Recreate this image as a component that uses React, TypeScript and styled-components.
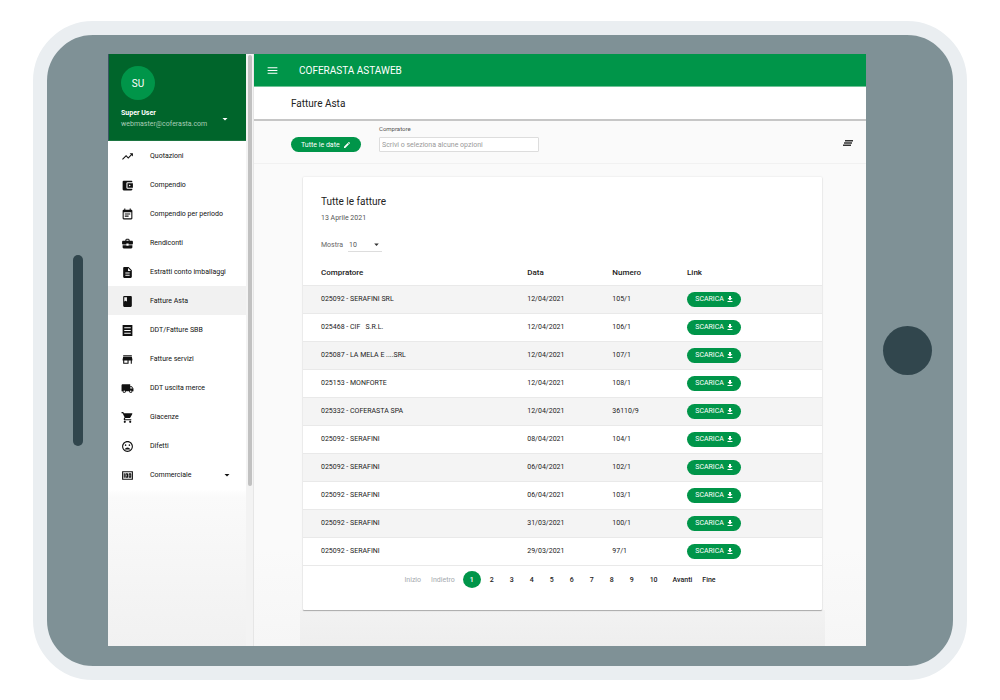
import React from "react";
import styled, { createGlobalStyle } from "styled-components";
import {
  MdTrendingUp,
  MdAccountBalanceWallet,
  MdEventNote,
  MdBusinessCenter,
  MdDescription,
  MdBook,
  MdStore,
  MdLocalShipping,
  MdShoppingCart,
  MdMoodBad,
  MdMoney,
  MdMenu,
  MdEdit,
  MdArrowDropDown,
} from "react-icons/md";

const GlobalStyle = createGlobalStyle`
  * { box-sizing: border-box; }
  body {
    margin: 0;
    background: #fff;
    font-family: Roboto, "Liberation Sans", sans-serif;
    font-size: 7px;
    color: #222;
  }
  button, input, select { font-family: inherit; margin: 0; }
  svg { display: block; flex: none; }
`;

const green = "#009549";

const Page = styled.div`
  display: flex;
  min-height: 100vh;
  padding: 21px 33px 20px;
`;

const Tablet = styled.div`
  flex: 1;
  min-width: 0;
  display: flex;
  align-items: stretch;
  border: 14px solid #eaeef1;
  border-radius: 60px;
  background: #7f9196;
  padding: 19px 0 20px;
`;

const Bezel = styled.div<{ $width: number }>`
  flex: none;
  width: ${(p) => p.$width}px;
  display: flex;
  align-items: center;
  justify-content: center;
`;

const HomeBezel = styled(Bezel)`
  padding-right: 4px;
`;

const Speaker = styled.div`
  width: 10px;
  height: 191px;
  border-radius: 5px;
  background: #31464d;
`;

const HomeButton = styled.div`
  width: 49px;
  height: 49px;
  border-radius: 50%;
  background: #31464d;
`;

const Screen = styled.div`
  flex: 1;
  min-width: 0;
  display: flex;
  background: #fafafa;
`;

const Sidebar = styled.aside`
  flex: none;
  width: 138px;
  display: flex;
  flex-direction: column;
  background: #fff;
`;

const Profile = styled.header`
  height: 87px;
  padding: 12px 12px 0;
  background: #00652b;
  border-left: 1px solid #3b5563;
  border-bottom: 1px solid #1c7541;
  color: #fff;
`;

const Avatar = styled.div`
  width: 34px;
  height: 34px;
  border-radius: 50%;
  background: ${green};
  display: flex;
  align-items: center;
  justify-content: center;
  font-size: 10px;
`;

const Account = styled.button`
  width: 100%;
  border: 0;
  padding: 0 3px 0 0;
  margin-top: 8px;
  background: none;
  color: inherit;
  display: flex;
  align-items: center;
  justify-content: space-between;
  text-align: left;
  font-size: 7px;
  line-height: 11px;
`;

const Email = styled.span`
  display: block;
  color: #a9cdb7;
`;

const UserName = styled.strong`
  display: block;
`;

const Nav = styled.nav`
  display: flex;
  flex-direction: column;
`;

const NavItem = styled.a<{ $active?: boolean }>`
  height: 29px;
  padding: 1px 13px 0;
  display: flex;
  align-items: center;
  gap: 16px;
  color: #111;
  font-size: 7px;
  text-decoration: none;
  white-space: nowrap;
  background: ${(p) => (p.$active ? "#f1f1f1" : "transparent")};
`;

const NavLabel = styled.span`
  flex: 1;
`;

const SidebarFill = styled.div`
  flex: 1;
  background: linear-gradient(#fff, #fafafa 8px, #f1f1f1);
`;

const ScrollTrack = styled.div`
  flex: none;
  width: 8px;
  padding: 1px 2px;
  background: #f3f3f3;
  border-right: 1px solid #e6e6e6;
`;

const ScrollThumb = styled.div`
  width: 4px;
  height: 73%;
  border-radius: 2px;
  background: #c1c1c1;
`;

const Main = styled.main`
  flex: 1;
  min-width: 0;
  display: flex;
  flex-direction: column;
`;

const AppBar = styled.header`
  height: 33px;
  padding: 0 12px;
  display: flex;
  align-items: center;
  gap: 20px;
  background: ${green};
  border-bottom: 1px solid #6fc397;
  color: #fff;
  font-size: 10px;
`;

const IconButton = styled.button`
  border: 0;
  padding: 0;
  background: none;
  color: inherit;
  display: flex;
`;

const TitleBar = styled.div`
  height: 34px;
  padding: 0 37px;
  display: flex;
  align-items: center;
  background: #fff;
  border-bottom: 2px solid #c6c6c6;
`;

const PageTitle = styled.h1`
  margin: 0;
  font-size: 10px;
  font-weight: 400;
`;

const Filters = styled.div`
  height: 43px;
  padding: 3px 13px 0 37px;
  display: flex;
  align-items: flex-start;
  gap: 18px;
  border-bottom: 1px solid #f1f1f1;
`;

const DateButton = styled.button`
  margin-top: 13px;
  width: 70px;
  height: 15px;
  padding: 0 10px;
  border: 0;
  border-radius: 8px;
  background: ${green};
  color: #fff;
  font-size: 7px;
  display: flex;
  align-items: center;
  justify-content: space-between;
  white-space: nowrap;
`;

const Field = styled.label`
  display: flex;
  flex-direction: column;
  gap: 4px;
  font-size: 6px;
  line-height: 9px;
  color: #555;
`;

const TextBox = styled.input`
  width: 160px;
  height: 15px;
  padding: 0 2px;
  border: 1px solid #ddd;
  border-radius: 1px;
  background: #fff;
  font-size: 7px;
  &::placeholder { color: #999; opacity: 1; }
`;

const ClearFilters = styled(IconButton)`
  margin: 16px 0 0 auto;
  color: #333;
`;

const Content = styled.div`
  flex: 1;
  display: flex;
  flex-direction: column;
  padding-top: 13px;
  background: linear-gradient(#fafafa 80%, #f6f6f6);
`;

const Card = styled.section`
  position: relative;
  margin: 0 44px 0 49px;
  padding: 18px 0 16px;
  background: #fff;
  border-radius: 1px;
  box-shadow: 0 1px 1px #aaa, 0 0 2px #ddd;
`;

const ContentFill = styled.div`
  flex: 1;
  margin: 0 41px 0 46px;
  background: linear-gradient(#f2f2f2, #eee);
`;

const CardHead = styled.div`
  padding: 0 18px;
`;

const CardTitle = styled.h2`
  margin: 0;
  font-size: 10px;
  line-height: 13px;
  font-weight: 400;
`;

const CardDate = styled.p`
  margin: 5px 0 0;
  line-height: 11px;
  color: #555;
`;

const PageSize = styled.label`
  margin-top: 14px;
  display: flex;
  align-items: center;
  gap: 5px;
  color: #666;
`;

const SelectWrap = styled.span`
  display: grid;
  align-items: center;
  justify-items: end;
  width: 34px;
  height: 14px;
  border-bottom: 1px solid #ddd;
  color: #333;
  & > * { grid-area: 1 / 1; }
`;

const Select = styled.select`
  appearance: none;
  width: 100%;
  border: 0;
  padding: 0 1px;
  background: none;
  color: #555;
  font-size: 7px;
`;

const Table = styled.table`
  width: 100%;
  table-layout: fixed;
  border-collapse: collapse;
  text-align: left;
`;

const Th = styled.th<{ $width?: string }>`
  width: ${(p) => p.$width ?? "auto"};
  height: 33px;
  padding: 8px 0 0;
  font-size: 8px;
  font-weight: 500;
  &:first-child { padding-left: 18px; }
`;

const Tr = styled.tr`
  border-top: 1px solid #e9e9e9;
  &:nth-child(odd) { background: #f4f4f4; }
  &:last-child { border-bottom: 1px solid #e9e9e9; }
`;

const Td = styled.td`
  height: 28px;
  padding: 0;
  font-size: 7px;
  white-space: pre;
  &:first-child { padding-left: 18px; }
`;

const Download = styled.a`
  width: 54px;
  height: 15px;
  border-radius: 8px;
  background: ${green};
  color: #fff;
  font-size: 7px;
  text-decoration: none;
  display: flex;
  align-items: center;
  justify-content: center;
  gap: 3px;
`;

const Pager = styled.nav`
  height: 28px;
  padding-right: 5px;
  display: flex;
  align-items: center;
  justify-content: center;
`;

const PageLink = styled.button`
  border: 0;
  padding: 0 8px;
  background: none;
  color: #222;
  font-size: 7px;
  font-weight: 500;
`;

const CurrentPage = styled(PageLink)`
  width: 18px;
  height: 17px;
  margin: 0 1px 0 3px;
  padding: 0;
  border-radius: 50%;
  background: ${green};
  color: #fff;
`;

const PagerWord = styled(PageLink)`
  padding: 0 5px;
  &:disabled { color: #a5a9ae; font-weight: 400; }
`;

const PagerNext = styled(PagerWord)`
  margin-left: 2px;
`;

const ReceiptIcon = ({ size }: { size: number }) => (
  <svg width={size} height={size} viewBox="0 0 24 24" fill="currentColor" aria-hidden="true">
    <path
      fillRule="evenodd"
      d="M3 2h18v20H3zM6 6v2h12V6zM6 11v2h12v-2zM6 16v2h12v-2z"
    />
  </svg>
);

const ClearIcon = () => (
  <svg width="10" height="6" viewBox="0 0 10 6" fill="currentColor" aria-hidden="true">
    <path d="M2 0h8v1.400H2zM1 2.300h8v1.400H1zM0 4.600h8V6H0z" />
  </svg>
);

const DownloadIcon = () => (
  <svg width="6" height="6" viewBox="0 0 12 12" fill="currentColor" aria-hidden="true">
    <path d="M4 0h4v4h3L6 9 1 4h3zM1 10h10v2H1z" />
  </svg>
);

const menu = [
  { label: "Quotazioni", Icon: MdTrendingUp },
  { label: "Compendio", Icon: MdAccountBalanceWallet },
  { label: "Compendio per periodo", Icon: MdEventNote },
  { label: "Rendiconti", Icon: MdBusinessCenter },
  { label: "Estratti conto imballaggi", Icon: MdDescription },
  { label: "Fatture Asta", Icon: MdBook, active: true },
  { label: "DDT/Fatture SBB", Icon: ReceiptIcon },
  { label: "Fatture servizi", Icon: MdStore },
  { label: "DDT uscita merce", Icon: MdLocalShipping },
  { label: "Giacenze", Icon: MdShoppingCart },
  { label: "Difetti", Icon: MdMoodBad },
  { label: "Commerciale", Icon: MdMoney, expandable: true },
];

const invoices = [
  ["025092 - SERAFINI SRL", "12/04/2021", "105/1"],
  ["025468 - CIF   S.R.L.", "12/04/2021", "106/1"],
  ["025087 - LA MELA E ....SRL", "12/04/2021", "107/1"],
  ["025153 - MONFORTE", "12/04/2021", "108/1"],
  ["025332 - COFERASTA SPA", "12/04/2021", "36110/9"],
  ["025092 - SERAFINI", "08/04/2021", "104/1"],
  ["025092 - SERAFINI", "06/04/2021", "102/1"],
  ["025092 - SERAFINI", "06/04/2021", "103/1"],
  ["025092 - SERAFINI", "31/03/2021", "100/1"],
  ["025092 - SERAFINI", "29/03/2021", "97/1"],
];

export default function App() {
  return (
    <Page>
      <GlobalStyle />
      <Tablet>
        <Bezel $width={61}>
          <Speaker />
        </Bezel>
        <Screen>
          <Sidebar>
            <Profile>
              <Avatar>SU</Avatar>
              <Account type="button">
                <span>
                  <UserName>Super User</UserName>
                  <Email>webmaster@coferasta.com</Email>
                </span>
                <MdArrowDropDown size={12} />
              </Account>
            </Profile>
            <Nav>
              {menu.map(({ label, Icon, active, expandable }) => (
                <NavItem key={label} href="#" $active={active}>
                  <Icon size={13} />
                  <NavLabel>{label}</NavLabel>
                  {expandable && <MdArrowDropDown size={12} />}
                </NavItem>
              ))}
            </Nav>
            <SidebarFill />
          </Sidebar>
          <ScrollTrack>
            <ScrollThumb />
          </ScrollTrack>
          <Main>
            <AppBar>
              <IconButton type="button" aria-label="Menu">
                <MdMenu size={13} />
              </IconButton>
              <span>COFERASTA ASTAWEB</span>
            </AppBar>
            <TitleBar>
              <PageTitle>Fatture Asta</PageTitle>
            </TitleBar>
            <Filters>
              <DateButton type="button">
                Tutte le date
                <MdEdit size={8} />
              </DateButton>
              <Field>
                Compratore
                <TextBox type="text" placeholder="Scrivi o seleziona alcune opzioni" />
              </Field>
              <ClearFilters type="button" aria-label="Azzera filtri">
                <ClearIcon />
              </ClearFilters>
            </Filters>
            <Content>
              <Card>
                <CardHead>
                  <CardTitle>Tutte le fatture</CardTitle>
                  <CardDate>13 Aprile 2021</CardDate>
                  <PageSize>
                    Mostra
                    <SelectWrap>
                      <Select defaultValue="10">
                        <option>10</option>
                        <option>25</option>
                        <option>50</option>
                      </Select>
                      <MdArrowDropDown size={11} pointerEvents="none" />
                    </SelectWrap>
                  </PageSize>
                </CardHead>
                <Table>
                  <thead>
                    <tr>
                      <Th $width="43.2%">Compratore</Th>
                      <Th $width="16.4%">Data</Th>
                      <Th $width="14.4%">Numero</Th>
                      <Th>Link</Th>
                    </tr>
                  </thead>
                  <tbody>
                    {invoices.map(([buyer, date, number]) => (
                      <Tr key={number}>
                        <Td>{buyer}</Td>
                        <Td>{date}</Td>
                        <Td>{number}</Td>
                        <Td>
                          <Download href="#">
                            SCARICA
                            <DownloadIcon />
                          </Download>
                        </Td>
                      </Tr>
                    ))}
                  </tbody>
                </Table>
                <Pager aria-label="Pagine">
                  <PagerWord type="button" disabled>Inizio</PagerWord>
                  <PagerWord type="button" disabled>Indietro</PagerWord>
                  <CurrentPage type="button" aria-current="page">1</CurrentPage>
                  {[2, 3, 4, 5, 6, 7, 8, 9, 10].map((n) => (
                    <PageLink key={n} type="button">{n}</PageLink>
                  ))}
                  <PagerNext type="button">Avanti</PagerNext>
                  <PagerWord type="button">Fine</PagerWord>
                </Pager>
              </Card>
              <ContentFill />
            </Content>
          </Main>
        </Screen>
        <HomeBezel $width={87}>
          <HomeButton />
        </HomeBezel>
      </Tablet>
    </Page>
  );
}
